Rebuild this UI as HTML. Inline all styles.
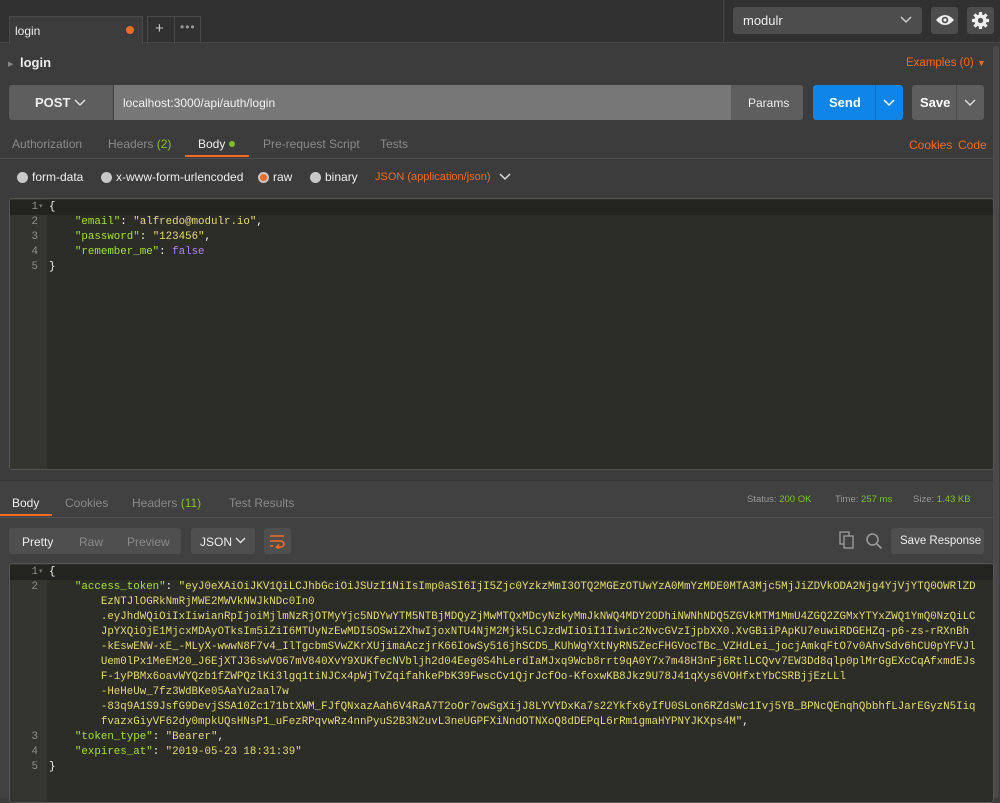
<!DOCTYPE html>
<html><head><meta charset="utf-8">
<style>
*{box-sizing:border-box;margin:0;padding:0}
body{width:1000px;height:798px;overflow:hidden;background:#3c3c3c;font-family:"Liberation Sans",sans-serif;font-size:12px;color:#ddd;position:relative}
.a{position:absolute}
.mono{font-family:"Liberation Mono",monospace;font-size:10.8px;line-height:15px;white-space:pre}
.k{color:#a6e22e}.s{color:#e6db74}.p{color:#f8f8f2}.f{color:#ae81ff}
.ln{color:#8f908a;text-align:right;width:26px}
.or{color:#f26b21}.gr{color:#7cc226}
.tab{color:#8a8a8a}
.rad{width:11px;height:11px;border-radius:50%;background:#c8c8c8;display:inline-block}
</style></head><body>
<div class="a" style="left:0;top:0;width:1000px;height:43px;background:#313131;border-bottom:1px solid #474747"></div>
<div class="a" style="left:723px;top:0;width:1px;height:43px;background:#474747"></div>
<div class="a" style="left:9px;top:16px;width:134px;height:28px;background:#3c3c3c;border:1px solid #4a4a4a;border-bottom:none"></div>
<div class="a" style="left:15px;top:24px;color:#eee">login</div>
<div class="a" style="left:126px;top:26px;width:8px;height:8px;border-radius:50%;background:#f26b21"></div>
<div class="a" style="left:147px;top:16px;width:54px;height:27px;border:1px solid #4a4a4a;border-bottom:none"></div>
<div class="a" style="left:174px;top:16px;width:1px;height:27px;background:#4a4a4a"></div>
<div class="a" style="left:155px;top:20px;color:#ccc;font-size:15px">+</div>
<div class="a" style="left:180px;top:20px;color:#999;font-size:12px;letter-spacing:1px">•••</div>
<div class="a" style="left:733px;top:7px;width:189px;height:27px;background:#4d4d4d;border-radius:3px"></div>
<div class="a" style="left:743px;top:13px;color:#eee;font-size:13px">modulr</div>
<svg class="a" style="left:900px;top:16px" width="12" height="8"><path d="M1 1l5 5 5-5" stroke="#ccc" fill="none" stroke-width="1.5"/></svg>
<div class="a" style="left:931px;top:7px;width:27px;height:27px;background:#4d4d4d;border-radius:3px"></div>
<svg class="a" style="left:935px;top:13px" width="20" height="14"><path d="M1 7Q10-3 19 7Q10 17 1 7Z" fill="#eee"/><circle cx="10" cy="7" r="3.3" fill="#4d4d4d"/><circle cx="10" cy="7" r="1.6" fill="#eee"/></svg>
<div class="a" style="left:967px;top:7px;width:27px;height:27px;background:#4d4d4d;border-radius:3px"></div>
<svg class="a" style="left:971px;top:11px" width="19" height="19" viewBox="0 0 20 20"><g fill="#eee"><circle cx="10" cy="10" r="6.5"/><g stroke="#eee" stroke-width="3.4"><path d="M10 1v18M1 10h18M3.6 3.6l12.8 12.8M16.4 3.6L3.6 16.4"/></g></g><circle cx="10" cy="10" r="2.8" fill="#4d4d4d"/></svg>
<div class="a" style="left:993px;top:46px;width:6px;height:752px;background:#4a4a4a;border-radius:3px"></div>
<div class="a" style="left:8px;top:60px;color:#888;font-size:7px">▶</div>
<div class="a" style="left:20px;top:55px;color:#eee;font-size:13px;font-weight:bold">login</div>
<div class="a or" style="left:906px;top:57px;font-size:11.5px">Examples (0) <span style="font-size:9px">▼</span></div>
<div class="a" style="left:9px;top:85px;width:104px;height:35px;background:#5e5e5e;border-radius:3px 0 0 3px"></div>
<div class="a" style="left:35px;top:95px;color:#eee;font-weight:bold;font-size:13px">POST</div>
<svg class="a" style="left:74px;top:99px" width="12" height="8"><path d="M1 1l5 5 5-5" stroke="#ddd" fill="none" stroke-width="1.5"/></svg>
<div class="a" style="left:114px;top:85px;width:617px;height:35px;background:#777"></div>
<div class="a" style="left:123px;top:96px;color:#f2f2f2">localhost:3000/api/auth/login</div>
<div class="a" style="left:731px;top:85px;width:72px;height:35px;background:#5e5e5e;border-radius:0 3px 3px 0"></div>
<div class="a" style="left:748px;top:96px;color:#eee">Params</div>
<div class="a" style="left:813px;top:85px;width:90px;height:35px;background:#0e85e9;border-radius:3px"></div>
<div class="a" style="left:875px;top:85px;width:1px;height:35px;background:#0a6fc4"></div>
<div class="a" style="left:829px;top:95px;color:#fff;font-weight:bold;font-size:13px">Send</div>
<svg class="a" style="left:883px;top:99px" width="12" height="8"><path d="M1 1l5 5 5-5" stroke="#fff" fill="none" stroke-width="1.5"/></svg>
<div class="a" style="left:912px;top:85px;width:72px;height:35px;background:#5e5e5e;border-radius:3px"></div>
<div class="a" style="left:956px;top:85px;width:1px;height:35px;background:#4c4c4c"></div>
<div class="a" style="left:920px;top:95px;color:#fff;font-weight:bold;font-size:13px">Save</div>
<svg class="a" style="left:964px;top:99px" width="12" height="8"><path d="M1 1l5 5 5-5" stroke="#ddd" fill="none" stroke-width="1.5"/></svg>
<div class="a tab" style="left:12px;top:137px">Authorization</div>
<div class="a tab" style="left:108px;top:137px">Headers <span class="gr">(2)</span></div>
<div class="a" style="left:198px;top:137px;color:#eee">Body</div>
<div class="a" style="left:229px;top:141px;width:6px;height:6px;border-radius:50%;background:#7cc226"></div>
<div class="a tab" style="left:263px;top:137px">Pre-request Script</div>
<div class="a tab" style="left:380px;top:137px">Tests</div>
<div class="a or" style="left:909px;top:138px">Cookies</div>
<div class="a or" style="left:958px;top:138px">Code</div>
<div class="a" style="left:0;top:158px;width:993px;height:1px;background:#4c4c4c"></div>
<div class="a" style="left:185px;top:155px;width:64px;height:2px;background:#f26b21"></div>
<div class="a" style="left:17px;top:172px"><span class="rad"></span></div>
<div class="a" style="left:32px;top:170px;color:#eee">form-data</div>
<div class="a" style="left:101px;top:172px"><span class="rad"></span></div>
<div class="a" style="left:116px;top:170px;color:#eee">x-www-form-urlencoded</div>
<div class="a" style="left:258px;top:172px"><span class="rad" style="background:#f26b21;border:2px solid #c8c8c8"></span></div>
<div class="a" style="left:273px;top:170px;color:#eee">raw</div>
<div class="a" style="left:310px;top:172px"><span class="rad"></span></div>
<div class="a" style="left:325px;top:170px;color:#eee">binary</div>
<div class="a or" style="left:375px;top:171px;font-size:11px">JSON (application/json)</div>
<svg class="a" style="left:499px;top:173px" width="12" height="8"><path d="M1 1l5 5 5-5" stroke="#ddd" fill="none" stroke-width="1.5"/></svg>
<div class="a" style="left:9px;top:198px;width:985px;height:272px;background:#2c2d27;border:1px solid #555;border-radius:3px;overflow:hidden">
 <div class="a" style="left:0;top:0;width:37px;height:272px;background:#34352e"></div>
 <div class="a" style="left:0;top:1px;width:985px;height:15px;background:#232320"></div>
 <div class="a mono ln" style="left:2px;top:1px">1<br>2<br>3<br>4<br>5</div>
 <div class="a mono" style="left:29px;top:1px;color:#777;font-size:7px">▾</div>
 <div class="a mono p" style="left:39px;top:1px">{
    <span class="k">"email"</span>: <span class="s">"alfredo@modulr.io"</span>,
    <span class="k">"password"</span>: <span class="s">"123456"</span>,
    <span class="k">"remember_me"</span>: <span class="f">false</span>
}</div>
</div>
<div class="a" style="left:0;top:480px;width:993px;height:318px;background:#414141;border-top:1px solid #353535"></div>
<div class="a" style="left:12px;top:496px;color:#eee">Body</div>
<div class="a tab" style="left:65px;top:496px">Cookies</div>
<div class="a tab" style="left:132px;top:496px">Headers <span class="gr">(11)</span></div>
<div class="a tab" style="left:229px;top:496px">Test Results</div>
<div class="a" style="left:0;top:517px;width:993px;height:1px;background:#505050"></div>
<div class="a" style="left:0;top:514px;width:52px;height:2px;background:#f26b21"></div>
<div class="a" style="left:747px;top:494px;font-size:9.5px;color:#999">Status: <span class="gr">200 OK</span></div>
<div class="a" style="left:835px;top:494px;font-size:9.5px;color:#999">Time: <span class="gr">257 ms</span></div>
<div class="a" style="left:913px;top:494px;font-size:9.5px;color:#999">Size: <span class="gr">1.43 KB</span></div>
<div class="a" style="left:9px;top:528px;width:172px;height:26px;background:#4f4f4f;border-radius:3px"></div>
<div class="a" style="left:22px;top:535px;color:#eee">Pretty</div>
<div class="a tab" style="left:79px;top:535px">Raw</div>
<div class="a tab" style="left:127px;top:535px">Preview</div>
<div class="a" style="left:191px;top:528px;width:64px;height:26px;background:#4f4f4f;border-radius:3px"></div>
<div class="a" style="left:200px;top:535px;color:#eee">JSON</div>
<svg class="a" style="left:235px;top:537px" width="11" height="8"><path d="M1 1l4.5 4.5 4.5-4.5" stroke="#ddd" fill="none" stroke-width="1.5"/></svg>
<div class="a" style="left:264px;top:528px;width:27px;height:26px;background:#4f4f4f;border-radius:3px"></div>
<svg class="a" style="left:269px;top:533px" width="17" height="16"><path d="M1 3h14M1 8h11a3 3 0 0 1 0 6H8M10 11.5l-2.5 2.5 2.5 2M1 13h3" stroke="#f26b21" fill="none" stroke-width="1.6"/></svg>
<svg class="a" style="left:839px;top:531px" width="16" height="19"><rect x="1" y="1" width="9" height="12" stroke="#999" fill="none" stroke-width="1.4"/><rect x="5" y="5" width="9" height="12" stroke="#999" fill="#414141" stroke-width="1.4"/></svg>
<svg class="a" style="left:865px;top:532px" width="18" height="18"><circle cx="7.5" cy="7.5" r="5.5" stroke="#999" fill="none" stroke-width="1.6"/><path d="M11.5 11.5l5 5" stroke="#999" stroke-width="1.8"/></svg>
<div class="a" style="left:891px;top:528px;width:93px;height:26px;background:#4f4f4f;border-radius:3px"></div>
<div class="a" style="left:900px;top:535px;color:#eee;font-size:11.5px">Save Response</div>
<div class="a" style="left:9px;top:563px;width:985px;height:240px;background:#2c2d27;border:1px solid #555;border-radius:3px;overflow:hidden">
 <div class="a" style="left:0;top:0;width:37px;height:240px;background:#34352e"></div>
 <div class="a" style="left:0;top:1px;width:985px;height:15px;background:#232320"></div>
 <div class="a mono ln" style="left:2px;top:1px">1<br>2<br><br><br><br><br><br><br><br><br><br>3<br>4<br>5</div>
 <div class="a mono" style="left:29px;top:1px;color:#777;font-size:7px">▾</div>
 <div class="a mono p" style="left:39px;top:1px">{
    <span class="k">"access_token"</span>: <span class="s">"eyJ0eXAiOiJKV1QiLCJhbGciOiJSUzI1NiIsImp0aSI6IjI5Zjc0YzkzMmI3OTQ2MGEzOTUwYzA0MmYzMDE0MTA3Mjc5MjJiZDVkODA2Njg4YjVjYTQ0OWRlZD
        EzNTJlOGRkNmRjMWE2MWVkNWJkNDc0In0
        .eyJhdWQiOiIxIiwianRpIjoiMjlmNzRjOTMyYjc5NDYwYTM5NTBjMDQyZjMwMTQxMDcyNzkyMmJkNWQ4MDY2ODhiNWNhNDQ5ZGVkMTM1MmU4ZGQ2ZGMxYTYxZWQ1YmQ0NzQiLC
        JpYXQiOjE1MjcxMDAyOTksIm5iZiI6MTUyNzEwMDI5OSwiZXhwIjoxNTU4NjM2Mjk5LCJzdWIiOiI1Iiwic2NvcGVzIjpbXX0.XvGBiiPApKU7euwiRDGEHZq-p6-zs-rRXnBh
        -kEswENW-xE_-MLyX-wwwN8F7v4_IlTgcbmSVwZKrXUjimaAczjrK66IowSy516jhSCD5_KUhWgYXtNyRN5ZecFHGVocTBc_VZHdLei_jocjAmkqFtO7v0AhvSdv6hCU0pYFVJl
        Uem0lPx1MeEM20_J6EjXTJ36swVO67mV840XvY9XUKfecNVbljh2d04Eeg0S4hLerdIaMJxq9Wcb8rrt9qA0Y7x7m48H3nFj6RtlLCQvv7EW3Dd8qlp0plMrGgEXcCqAfxmdEJs
        F-1yPBMx6oavWYQzb1fZWPQzlKi3lgq1tiNJCx4pWjTvZqifahkePbK39FwscCv1QjrJcfOo-KfoxwKB8Jkz9U78J41qXys6VOHfxtYbCSRBjjEzLLl
        -HeHeUw_7fz3WdBKe05AaYu2aal7w
        -83q9A1S9JsfG9DevjSSA10Zc171btXWM_FJfQNxazAah6V4RaA7T2oOr7owSgXijJ8LYVYDxKa7s22Ykfx6yIfU0SLon6RZdsWc1Ivj5YB_BPNcQEnqhQbbhfLJarEGyzN5Iiq
        fvazxGiyVF62dy0mpkUQsHNsP1_uFezRPqvwRz4nnPyuS2B3N2uvL3neUGPFXiNndOTNXoQ8dDEPqL6rRm1gmaHYPNYJKXps4M"</span>,
    <span class="k">"token_type"</span>: <span class="s">"Bearer"</span>,
    <span class="k">"expires_at"</span>: <span class="s">"2019-05-23 18:31:39"</span>
}</div>
</div>
</body></html>
